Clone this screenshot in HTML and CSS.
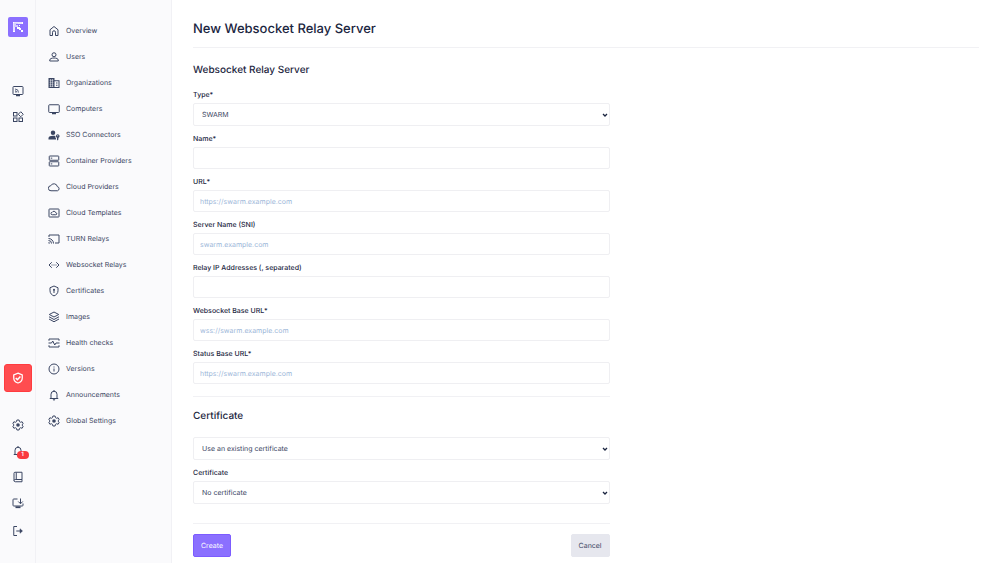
FILE: index.html
```html
<!DOCTYPE html>
<html lang="en">
<head>
<meta charset="utf-8">
<title>New Websocket Relay Server</title>
<link rel="stylesheet" href="styles.css">
</head>
<body>
<svg class="sprite" aria-hidden="true">
  <symbol id="gear" viewBox="0 0 24 24"><path fill="none" stroke="currentColor" stroke-width="2" stroke-linejoin="round" d="M9.800 2h4.400l.7 3.200 2.200 1.300 3.100-1 2.200 3.800-2.400 2.200v1l2.400 2.200-2.200 3.800-3.100-1-2.200 1.300-.7 3.200H9.800l-.7-3.200-2.200-1.300-3.100 1-2.200-3.800L4 12.500v-1L1.600 9.300l2.200-3.800 3.100 1 2.200-1.300z"/><circle cx="12" cy="12" r="3.600" fill="currentColor"/></symbol>
  <symbol id="bell" viewBox="0 0 24 24"><path fill="none" stroke="currentColor" stroke-width="2" d="M3.500 19h17M6 19v-8.500a6 6 0 0 1 12 0V19M12 4.500V2"/><path fill="currentColor" d="M9.500 20.500h5a2.500 2.500 0 0 1-5 0z"/></symbol>
</svg>
<div class="app">
  <aside class="rail">
    <a class="logo" href="#" aria-label="Home">
      <svg viewBox="0 0 20 20"><path fill="#fff" d="M5 5h10v2H8v1h2v2h2v2H9v-2H7v5H5z"/><path fill="#fff" d="M11 11h2v2h-2zM13 13h2v2h-2zM11 8h1v1h-1z"/><path stroke="#8b70ff" stroke-width=".4" d="M7 5v5M9 5v5M11 5v2M13 5v2M5 7h5M5 9h5M5 11h2M5 13h2"/></svg>
    </a>
    <nav class="rail-top" aria-label="Workspace">
      <a class="rail-link" href="#" aria-label="Sessions"><svg viewBox="0 0 24 24" fill="none" stroke="currentColor" stroke-width="2"><rect x="2" y="3" width="20" height="16" rx="1.500"/><path d="M8 21h8" stroke-width="3"/><path d="M6 8a7 7 0 0 1 7 7M6 11.500a3.500 3.500 0 0 1 3.500 3.500" stroke-width="1.700"/><path d="M6 14h1.500"/></svg></a>
      <a class="rail-link" href="#" aria-label="Apps"><svg viewBox="0 0 24 24" fill="none" stroke="currentColor" stroke-width="2"><rect x="3" y="3" width="7" height="7"/><path d="M17.500 1.500l5 5-5 5-5-5z"/><rect x="3" y="14" width="7" height="7"/><rect x="14" y="14" width="7" height="7"/></svg></a>
    </nav>
    <nav class="rail-bottom" aria-label="Account">
      <a class="admin" href="#" aria-label="Administration"><svg viewBox="0 0 24 24" fill="none" stroke="currentColor" stroke-width="2.500"><path d="M12 2.300l8.500 3.500V12c0 5-3.600 8.500-8.500 10-4.900-1.500-8.500-5-8.500-10V5.800z"/><path d="M7.500 12l3.300 3.300 6-6.300" stroke-width="3"/></svg></a>
      <a class="rail-link" href="#" aria-label="Settings"><svg><use href="#gear"/></svg></a>
      <a class="rail-link" href="#" aria-label="Notifications"><svg><use href="#bell"/></svg><span class="badge">1</span></a>
      <a class="rail-link" href="#" aria-label="Documentation"><svg viewBox="0 0 24 24" fill="none" stroke="currentColor" stroke-width="2"><path d="M20 17V2.500H6a2 2 0 0 0-2 2V19a2.500 2.500 0 0 0 2.500 2.500H20V17H6.500A2.500 2.500 0 0 0 4 19M8.500 3v14"/></svg></a>
      <a class="rail-link" href="#" aria-label="Download"><svg viewBox="0 0 24 24" fill="none" stroke="currentColor" stroke-width="2"><path d="M11 4H3.500A1.500 1.500 0 0 0 2 5.500v11A1.500 1.500 0 0 0 3.500 18h17a1.500 1.500 0 0 0 1.500-1.500V13M17 3v10M12.500 9l4.500 4.500L21.500 9"/><path d="M7 20.500h10" stroke-width="3.500"/></svg></a>
      <a class="rail-link rail-exit" href="#" aria-label="Sign out"><svg viewBox="0 0 24 24" fill="none" stroke="currentColor" stroke-width="2"><path d="M10 3H3.500v18H10M8.500 12H20"/><path d="M16 7.500l5 4.500-5 4.500z" fill="currentColor" stroke-width="1"/></svg></a>
    </nav>
  </aside>

  <nav class="side" aria-label="Administration">
    <a class="side-link" href="#"><svg viewBox="0 0 24 24" fill="none" stroke="currentColor" stroke-width="2"><path d="M4 9.500l8-6.500 8 6.500V21h-5v-6.500a3 3 0 0 0-6 0V21H4z" stroke-linejoin="round"/></svg>Overview</a>
    <a class="side-link" href="#"><svg viewBox="0 0 24 24" fill="none" stroke="currentColor" stroke-width="2"><circle cx="12" cy="7.500" r="4"/><path d="M3.500 20v-2c0-2.500 4-4 8.500-4s8.500 1.500 8.500 4v2z"/></svg>Users</a>
    <a class="side-link" href="#"><svg viewBox="0 0 24 24" fill="currentColor"><path fill-rule="evenodd" d="M1 2h12v4.500h10V22H1zM13 8.500V20h8V8.500z"/><path d="M16 11h3v2h-3zM16 15.500h3v2h-3z"/><path stroke="#fafafc" stroke-width="1" d="M3 6.500h8M3 10.500h8M3 14.500h8M3 18.500h8M5 4v16M9 4v16"/></svg>Organizations</a>
    <a class="side-link" href="#"><svg viewBox="0 0 24 24" fill="none" stroke="currentColor" stroke-width="2"><rect x="1.500" y="3.500" width="21" height="15.500" rx="1.500"/><path d="M8 21h8" stroke-width="3"/></svg>Computers</a>
    <a class="side-link" href="#"><svg viewBox="0 0 24 24" fill="currentColor"><circle cx="10" cy="7.500" r="4.500"/><path d="M1 21v-3c0-3 4.500-4.500 9-4.500 2 0 3.500.2 4.800.7A5 5 0 0 0 16 19v2z"/><path d="M19.500 10.500a3.800 3.800 0 0 1 1.500 7.200v1.300l-1 1 1 1-1.500 2-1.500-1.500v-3.800a3.800 3.800 0 0 1 1.500-7.200z"/><circle cx="19.500" cy="13.500" r="1.200" fill="#fafafc"/></svg>SSO Connectors</a>
    <a class="side-link" href="#"><svg viewBox="0 0 24 24" fill="none" stroke="currentColor" stroke-width="2"><rect x="2.500" y="2" width="19" height="8.500" rx="1"/><rect x="2.500" y="13.500" width="19" height="8.500" rx="1"/><path d="M5.500 6.300h3M5.500 17.800h3"/></svg>Container Providers</a>
    <a class="side-link" href="#"><svg viewBox="0 0 24 24" fill="none" stroke="currentColor" stroke-width="2"><path d="M6 19.500a5 5 0 0 1-.5-10 7 7 0 0 1 13.200 1.800 4.200 4.200 0 0 1 .3 8.200z"/></svg>Cloud Providers</a>
    <a class="side-link" href="#"><svg viewBox="0 0 24 24" fill="none" stroke="currentColor" stroke-width="2"><rect x="2" y="4" width="20" height="16" rx="1"/><path d="M8.500 15.500a2.500 2.500 0 0 1 0-5 3.800 3.800 0 0 1 7 1 2 2 0 0 1 0 4z"/></svg>Cloud Templates</a>
    <a class="side-link" href="#"><svg viewBox="0 0 24 24" fill="none" stroke="currentColor" stroke-width="2"><path d="M2 8V4h20v16h-8M1 11a10 10 0 0 1 10 10M1 15a6 6 0 0 1 6 6"/><path d="M1 18a3 3 0 0 1 3 3H1z" fill="currentColor" stroke="none"/></svg>TURN Relays</a>
    <a class="side-link" href="#"><svg viewBox="0 0 24 24" fill="none" stroke="currentColor" stroke-width="2"><path d="M7.500 6.500L2 12l5.500 5.500M16.500 6.500L22 12l-5.500 5.500M7 12h2M11 12h2M15 12h2"/></svg>Websocket Relays</a>
    <a class="side-link" href="#"><svg viewBox="0 0 24 24" fill="none" stroke="currentColor" stroke-width="2"><path d="M12 2l8 3.500V11.500c0 5-3.400 8.500-8 10.300-4.600-1.800-8-5.300-8-10.300v-6z"/><circle cx="12" cy="9.500" r="2" fill="currentColor" stroke="none"/><path d="M12 9.500v6.500"/></svg>Certificates</a>
    <a class="side-link" href="#"><svg viewBox="0 0 24 24" fill="none" stroke="currentColor" stroke-width="2" stroke-linejoin="round"><path d="M12 2l9.500 5-9.500 5-9.500-5zM2 11.500l10 5.500 10-5.500M2 16l10 5.500L22 16"/></svg>Images</a>
    <a class="side-link" href="#"><svg viewBox="0 0 24 24" fill="none" stroke="currentColor" stroke-width="2"><path d="M2 7.500V4h20v3.500M2 16.500V20h20v-3.500M1 12h6l2.500-4 4 8 2.500-4h7"/></svg>Health checks</a>
    <a class="side-link" href="#"><svg viewBox="0 0 24 24" fill="none" stroke="currentColor" stroke-width="2"><circle cx="12" cy="12" r="10"/><path d="M12 11v6M12 7v2"/></svg>Versions</a>
    <a class="side-link" href="#"><svg><use href="#bell"/></svg>Announcements</a>
    <a class="side-link" href="#"><svg><use href="#gear"/></svg>Global Settings</a>
  </nav>

  <main class="main">
    <h1 class="title">New Websocket Relay Server</h1>
    <form class="form">
      <section class="section">
        <h2 class="section-title">Websocket Relay Server</h2>
        <div class="field">
          <label for="type">Type*</label>
          <select class="control select" id="type"><option>SWARM</option></select>
        </div>
        <div class="field">
          <label for="name">Name*</label>
          <input class="control" id="name" type="text">
        </div>
        <div class="field">
          <label for="url">URL*</label>
          <input class="control" id="url" type="text" placeholder="https://swarm.example.com">
        </div>
        <div class="field">
          <label for="sni">Server Name (SNI)</label>
          <input class="control" id="sni" type="text" placeholder="swarm.example.com">
        </div>
        <div class="field">
          <label for="ips">Relay IP Addresses (, separated)</label>
          <input class="control" id="ips" type="text">
        </div>
        <div class="field">
          <label for="ws">Websocket Base URL*</label>
          <input class="control" id="ws" type="text" placeholder="wss://swarm.example.com">
        </div>
        <div class="field">
          <label for="status">Status Base URL*</label>
          <input class="control" id="status" type="text" placeholder="https://swarm.example.com">
        </div>
      </section>
      <section class="section section-cert">
        <h2 class="section-title">Certificate</h2>
        <select class="control select" aria-label="Certificate source"><option>Use an existing certificate</option></select>
        <div class="field">
          <label for="cert">Certificate</label>
          <select class="control select" id="cert"><option>No certificate</option></select>
        </div>
      </section>
      <div class="actions">
        <button class="btn btn-primary" type="button">Create</button>
        <button class="btn" type="button">Cancel</button>
      </div>
    </form>
  </main>
</div>
</body>
</html>
```
FILE: styles.css
```css
* { box-sizing: border-box; }

body {
  margin: 0;
  background: #fff;
  color: #1b2540;
  font: 7px/12px Inter, "Liberation Sans", sans-serif;
  text-rendering: geometricPrecision;
}

a { color: inherit; text-decoration: none; }

.sprite { display: none; }

.app { display: flex; min-height: 100vh; }

/* Icon rail */
.rail {
  display: flex;
  flex-direction: column;
  align-items: center;
  flex: none;
  width: 36px;
  padding: 17px 0 19px;
  background: #fafafc;
  border-right: 1px solid #f1f1f5;
  color: #3b4663;
}

.logo {
  width: 20px;
  height: 20px;
  border-radius: 2px;
  background: #8b70ff;
}

.logo svg { display: block; }

.rail-top,
.rail-bottom {
  display: flex;
  flex-direction: column;
  align-items: center;
}

.rail-top { margin-top: 41px; }
.rail-bottom { margin-top: auto; }

.rail-link {
  position: relative;
  display: flex;
  align-items: center;
  justify-content: center;
  width: 26px;
  height: 26px;
}

.rail-link svg { width: 12px; height: 12px; }
.rail-exit { margin-top: 2px; }

.admin {
  display: flex;
  align-items: center;
  justify-content: center;
  width: 28px;
  height: 28px;
  margin-bottom: 20px;
  border: 1px solid #ff3b3f;
  border-radius: 3px;
  background: #ff4d50;
  color: #fff;
}

.admin svg { width: 12px; height: 12px; }

.badge {
  position: absolute;
  top: 13px;
  left: 12px;
  width: 12px;
  border-radius: 4px;
  background: #f93a3f;
  color: #fff;
  font-size: 6px;
  font-weight: 600;
  line-height: 8px;
  text-align: center;
}

/* Section navigation */
.side {
  flex: none;
  width: 136px;
  padding: 18px 12px;
  background: #fafafc;
  border-right: 1px solid #f1f1f5;
  color: #3b4663;
}

.side-link {
  display: flex;
  align-items: center;
  gap: 6px;
  height: 26px;
}

.side-link svg { flex: none; width: 12px; height: 12px; }

/* Form page */
.main { flex: 1; min-width: 0; padding: 18px 21px 6px; }

.title {
  margin: 0;
  padding-bottom: 6px;
  border-bottom: 1px solid #f1f1f4;
  font-size: 13px;
  font-weight: 500;
  line-height: 23px;
}

.form { width: 53%; }

.section {
  display: flex;
  flex-direction: column;
  gap: 7px;
  padding: 13px 0 12px;
  border-bottom: 1px solid #f1f1f4;
}

.section-title {
  margin: 0 0 3px;
  font-size: 10px;
  font-weight: 500;
  line-height: 18px;
}

.section-cert { padding: 10px 0 19px; }
.section-cert .section-title { margin-bottom: 5px; }

.field { display: flex; flex-direction: column; gap: 2px; }
.field label { font-weight: 500; }

.control {
  width: 100%;
  height: 22px;
  padding: 0 6px;
  border: 1px solid #efeff2;
  border-radius: 2px;
  background: #fff;
  color: #3b4663;
  font: inherit;
  text-rendering: inherit;
}

.control::placeholder { color: #9db7d9; opacity: 1; }

.select {
  height: 23px;
  padding: 0 8px;
  appearance: none;
  background: #fff url("data:image/svg+xml,%3Csvg xmlns='http://www.w3.org/2000/svg' viewBox='0 0 6 4'%3E%3Cpath d='M1 1l2 2 2-2' fill='none' stroke='%231b2540' stroke-width='1.300'/%3E%3C/svg%3E") no-repeat right 1px center / 6px 4px;
}

.actions {
  display: flex;
  justify-content: space-between;
  padding-top: 10px;
}

.btn {
  height: 23px;
  padding: 0 7px;
  border: 1px solid #e6e7ee;
  border-radius: 2px;
  background: #e6e7ee;
  color: #3b4663;
  font: inherit;
  text-rendering: inherit;
}

.btn-primary {
  border-color: #7c5cff;
  background: #8b70ff;
  color: #fff;
}
```
